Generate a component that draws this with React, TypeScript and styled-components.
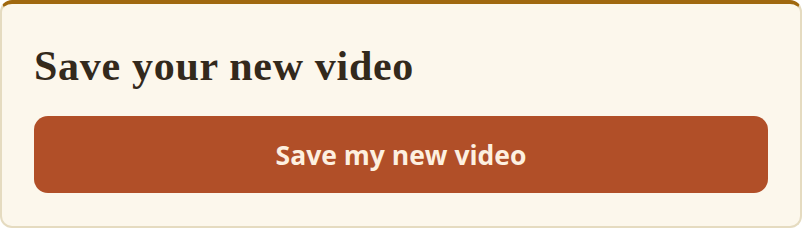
import styled, { createGlobalStyle } from 'styled-components'

const GlobalStyle = createGlobalStyle`
  html, body {
    margin: 0;
    padding: 0;
    background: #ffffff;
  }
  * {
    box-sizing: border-box;
  }
`

const Card = styled.section`
  width: 802px;
  height: 228px;
  background: #fcf7ec;
  border: 2px solid #e5dbc0;
  border-top: 4px solid #a0680f;
  border-radius: 12px;
  padding: 37px 32px 32px;
  display: flex;
  flex-direction: column;
  gap: 25px;
`

const Title = styled.h2`
  margin: 0;
  font-family: "Liberation Serif", "DejaVu Serif", serif;
  font-weight: 700;
  font-size: 42px;
  line-height: 50px;
  letter-spacing: 0.7px;
  color: #33291c;
`

const SaveButton = styled.button`
  width: 100%;
  height: 77px;
  border: none;
  border-radius: 14px;
  background: #b14f28;
  color: #fdf0e0;
  font-family: "Open Sans", "Noto Sans", sans-serif;
  font-weight: 700;
  font-size: 26.5px;
  cursor: pointer;
`

export default function App() {
  return (
    <>
      <GlobalStyle />
      <Card>
        <Title>Save your new video</Title>
        <SaveButton>Save my new video</SaveButton>
      </Card>
    </>
  )
}
